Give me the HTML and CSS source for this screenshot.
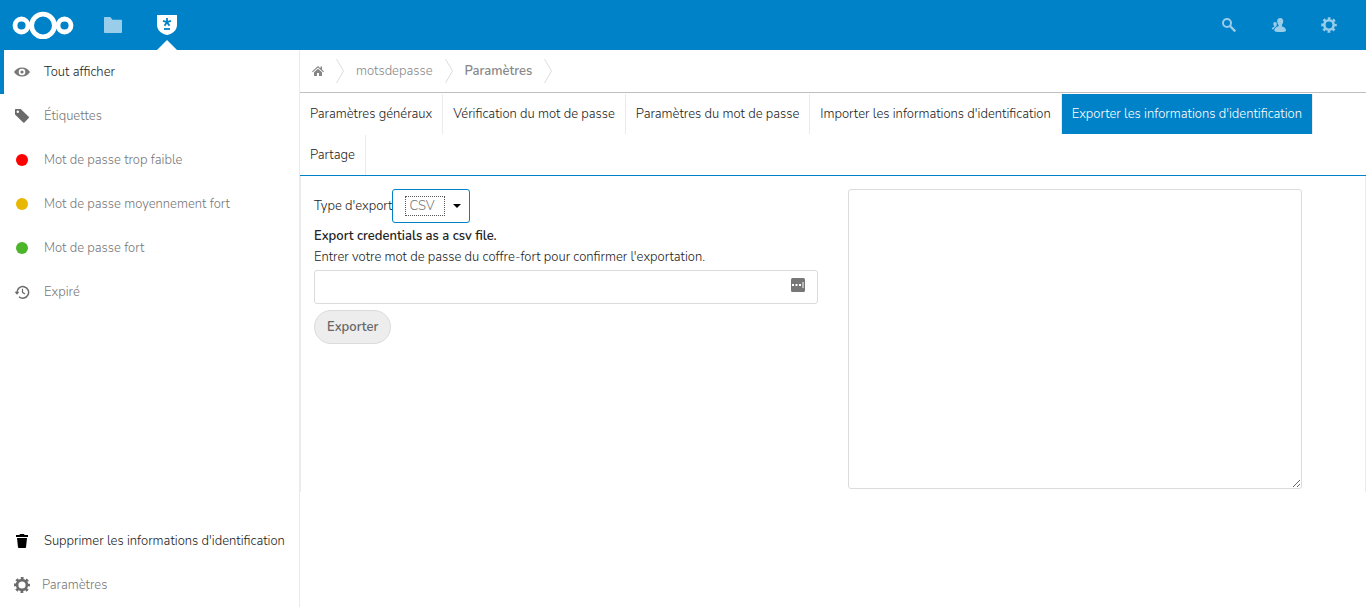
FILE: index.html
```
<!DOCTYPE html>
<html lang="fr">
<head>
  <meta charset="UTF-8" />
  <meta name="viewport" content="width=device-width, initial-scale=1.0"/>
  <title>Paramètres - motsdepasse</title>
  <link rel="stylesheet" href="styles.css">
</head>
<body>

  <!-- Top bar -->
  <header class="header">
    <a href="#" class="logo" aria-label="Accueil">
      <svg width="62" height="28" viewBox="0 0 62 28" fill="none" stroke="#fff">
        <circle cx="9.5" cy="14.5" r="6.5" stroke-width="4.8"/>
        <circle cx="31" cy="14.5" r="11.4" stroke-width="4.8"/>
        <circle cx="52.5" cy="14.5" r="6.5" stroke-width="4.8"/>
      </svg>
    </a>
    <nav class="apps">
      <a href="#" class="app" aria-label="Fichiers">
        <svg width="18" height="16" viewBox="0 0 18 16" fill="#fff"><path d="M.8 0h5.6l2 2.800h8.800c.5 0 .8.3.8.8v11.600c0 .5-.3.8-.8.8H.8c-.5 0-.8-.3-.8-.8V.8C0 .3.300 0 .8 0z"/></svg>
      </a>
      <a href="#" class="app active" aria-label="Mots de passe">
        <svg width="20" height="20" viewBox="0 0 20 20">
          <path fill="#fff" d="M0 0h20v10c0 5.200-4.500 8.800-10 10C4.500 18.800 0 15.200 0 10z"/>
          <g stroke="#0082c9" stroke-width="1.800" fill="none"><path d="M10 7.200V3M10 7.200L6 5.900M10 7.200l4-1.300M10 7.200l-2.500 3.600M10 7.200l2.500 3.600"/><path d="M7 14h6"/></g>
        </svg>
      </a>
    </nav>
    <div class="header-right">
      <button type="button" class="header-button" aria-label="Rechercher">
        <svg width="16" height="16" viewBox="0 0 16 16" fill="none" stroke="#fff"><circle cx="6" cy="6" r="4" stroke-width="2"/><path d="M9 9l5.300 5.300" stroke-width="2.400"/></svg>
      </button>
      <button type="button" class="header-button" aria-label="Contacts">
        <svg width="16" height="16" viewBox="0 0 16 16" fill="#fff"><path d="M9.200 1C7.500 1 6.200 2.200 6.200 4c0 1.700.5 2.800 1.300 3.800v1.400L5.600 10C4 10.800 3.300 12 3.300 13.400c0 1 2.500 1.600 6 1.600s5.700-.6 5.700-1.600c0-1.600-.8-2.800-2.600-3.500l-1.500-.7V7.800c.8-1 1.300-2.100 1.300-3.800 0-1.800-1.300-3-3-3z"/><path d="M4 5C2.900 5 2.300 5.800 2.300 6.800c0 .9.300 1.500.8 2v1L1.800 10.400C1 10.800.8 11.400.8 12.300h1.800c.4-1.300 1.200-2.400 2.900-3.100V8.400c.2-.4.300-1 .3-1.600C5.800 5.700 5.100 5 4 5z"/></svg>
      </button>
      <button type="button" class="header-button" aria-label="Réglages">
        <svg width="16" height="16" viewBox="0 0 16 16" fill="none" stroke="#fff"><circle cx="8" cy="8" r="4.700" stroke-width="2.600"/><circle cx="8" cy="8" r="6.600" stroke-width="2.400" stroke-dasharray="2.700 2.484" stroke-dashoffset="1.350"/></svg>
      </button>
    </div>
  </header>

  <div class="content">

    <!-- Left navigation -->
    <nav class="sidebar">
      <ul>
        <li><a href="#" class="nav-link active">
          <svg class="nav-icon" viewBox="0 0 16 16"><path fill="#777" fill-rule="evenodd" d="M8 3.400C4.500 3.400 1.500 5.500 0 8c1.500 2.500 4.500 4.600 8 4.600s6.500-2.100 8-4.600c-1.500-2.500-4.500-4.600-8-4.600zm0 1.300a3.300 3.300 0 1 1 0 6.600 3.300 3.300 0 0 1 0-6.600z"/><circle cx="8" cy="8" r="1.600" fill="#777"/></svg>
          Tout afficher</a></li>
        <li><a href="#" class="nav-link">
          <svg class="nav-icon" viewBox="0 0 16 16"><path fill="#6b6b6b" fill-rule="evenodd" d="M1 1.600C1 1.200 1.300 1 1.700 1h5l8 7.800c.5.500.4.900 0 1.300l-4.200 4.400c-.4.400-.9.400-1.300 0L1 6.500zM3.800 2.600a1.200 1.200 0 1 0 0 2.400 1.200 1.200 0 0 0 0-2.400z"/></svg>
          Étiquettes</a></li>
        <li><a href="#" class="nav-link"><span class="nav-icon"><span class="dot weak"></span></span>Mot de passe trop faible</a></li>
        <li><a href="#" class="nav-link"><span class="nav-icon"><span class="dot medium"></span></span>Mot de passe moyennement fort</a></li>
        <li><a href="#" class="nav-link"><span class="nav-icon"><span class="dot strong"></span></span>Mot de passe fort</a></li>
        <li><a href="#" class="nav-link">
          <svg class="nav-icon" viewBox="0 0 16 16" fill="none" stroke="#6b6b6b" stroke-width="1.500"><path d="M3 8.500a5.800 5.800 0 1 1 2 4.200"/><path d="M8.500 4.800v3.500l2.500 1.600" stroke-width="1.200"/><path d="M.6 7.800h4.800L3 10.800z" fill="#6b6b6b" stroke="none"/></svg>
          Expiré</a></li>
      </ul>
      <ul class="sidebar-bottom">
        <li><a href="#" class="nav-link dark">
          <svg class="nav-icon" viewBox="0 0 16 16"><path d="M6 1h4l.6 1H14v2H2V2h3.400zM3 5h10l-1 9.200c0 .5-.4.800-.8.800H4.800c-.4 0-.8-.3-.8-.8z"/></svg>
          Supprimer les informations d'identification</a></li>
        <li><button type="button" class="nav-link settings">
          <svg class="nav-icon" viewBox="0 0 16 16" fill="none" stroke="#6b6b6b"><circle cx="8" cy="8" r="4.900" stroke-width="2.600"/><circle cx="8" cy="8" r="6.800" stroke-width="2.400" stroke-dasharray="2.800 2.541" stroke-dashoffset="1.400"/></svg>
          Paramètres</button></li>
      </ul>
    </nav>

    <main class="main">
      <!-- Breadcrumb -->
      <nav class="breadcrumb">
        <a href="#" class="home" aria-label="Coffres">
          <svg width="12" height="10" viewBox="0 0 12 10" fill="#868686"><path d="M6 0l2.500 2.200V.6H10v3L12 5.400l-.7.800L6 1.600.7 6.200 0 5.400z"/><path d="M6 2.700l4 3.500V10H7V7H5v3H2V6.200z"/></svg>
        </a>
        <svg class="chevron" viewBox="0 0 8 24"><path d="M.5 0l7 12-7 12"/></svg>
        <a href="#">motsdepasse</a>
        <svg class="chevron" viewBox="0 0 8 24"><path d="M.5 0l7 12-7 12"/></svg>
        <a href="#" class="current">Paramètres</a>
        <svg class="chevron" viewBox="0 0 8 24"><path d="M.5 0l7 12-7 12"/></svg>
      </nav>

      <!-- Settings tabs -->
      <nav class="tabs">
        <a href="#" class="tab">Paramètres généraux</a>
        <a href="#" class="tab">Vérification du mot de passe</a>
        <a href="#" class="tab">Paramètres du mot de passe</a>
        <a href="#" class="tab">Importer les informations d'identification</a>
        <a href="#" class="tab active">Exporter les informations d'identification</a>
        <a href="#" class="tab">Partage</a>
      </nav>

      <section class="panel">
        <form class="export">
          <div class="type-row">
            <label for="exportType">Type d'export</label>
            <span class="select-wrap">
              <select id="exportType">
                <option>CSV</option>
                <option>JSON</option>
              </select>
              <span class="focus-ring"></span>
              <svg class="caret" width="8" height="4" viewBox="0 0 8 4"><path d="M0 0h8L4 4z"/></svg>
            </span>
          </div>
          <strong class="description">Export credentials as a csv file.</strong>
          <label for="vaultPassword">Entrer votre mot de passe du coffre-fort pour confirmer l'exportation.</label>
          <div class="password-wrap">
            <input type="password" id="vaultPassword">
            <svg class="key-badge" width="14" height="14" viewBox="0 0 14 14"><rect width="14" height="14" rx="1.500" fill="#777"/><path fill="#fff" d="M1 6h2v2H1zM4.500 6h2v2h-2zM8 6h2v2H8zM11.500 4h1v6h-1z"/></svg>
          </div>
          <button type="button" class="export-button">Exporter</button>
        </form>
        <div class="output">
          <textarea aria-label="Journal d'exportation"></textarea>
        </div>
      </section>
    </main>
  </div>

</body>
</html>
```
FILE: styles.css
```
* {
  box-sizing: border-box;
}

body {
  margin: 0;
  min-height: 100vh;
  display: flex;
  flex-direction: column;
  background-color: #fff;
  color: #222;
  font-family: Nunito, Lato, sans-serif;
  font-size: 13px;
  font-weight: 300;
  line-height: 20px;
}

a {
  color: inherit;
  text-decoration: none;
}

button,
input,
select,
textarea {
  font: inherit;
  color: inherit;
}

/* Top bar */
.header {
  height: 50px;
  display: flex;
  background-color: #0082c9;
}

.logo {
  display: flex;
  align-items: center;
  padding: 0 12px;
}

.apps {
  display: flex;
}

.app {
  width: 54px;
  display: flex;
  align-items: center;
  justify-content: center;
  position: relative;
}

.app svg {
  opacity: 0.6;
}

.app.active svg {
  opacity: 1;
}

.app.active::after {
  content: "";
  position: absolute;
  bottom: 0;
  left: 17px;
  border: 10px solid transparent;
  border-top: 0;
  border-bottom-color: #fff;
}

.header-right {
  display: flex;
  margin-left: auto;
  padding-right: 12px;
}

.header-button {
  width: 50px;
  padding: 0;
  border: none;
  background: none;
  display: flex;
  align-items: center;
  justify-content: center;
  opacity: 0.6;
}

/* Left navigation */
.content {
  flex: 1;
  display: flex;
}

.sidebar {
  width: 300px;
  flex: none;
  display: flex;
  flex-direction: column;
  border-right: 1px solid #ebebeb;
}

.sidebar ul {
  list-style: none;
  margin: 0;
  padding: 0;
}

.sidebar .sidebar-bottom {
  margin-top: auto;
}

.nav-link {
  width: 100%;
  height: 44px;
  display: flex;
  align-items: center;
  gap: 14px;
  padding: 0 0 0 10px;
  border: none;
  border-left: 4px solid transparent;
  background: none;
  color: #777;
  white-space: nowrap;
}

.nav-link.active {
  border-left-color: #0082c9;
  color: #222;
}

.nav-link.dark {
  color: #222;
}

.nav-link.settings {
  gap: 12px;
}

.nav-icon {
  width: 16px;
  height: 16px;
  flex: none;
  display: flex;
  align-items: center;
  justify-content: center;
}

.dot {
  width: 12px;
  height: 12px;
  border-radius: 50%;
}

.weak {
  background-color: #ff0000;
}

.medium {
  background-color: #eab700;
}

.strong {
  background-color: #4cb52a;
}

/* Breadcrumb */
.main {
  flex: 1;
  min-width: 0;
}

.breadcrumb {
  height: 43px;
  display: flex;
  align-items: center;
  gap: 12px;
  padding-left: 12px;
  border-bottom: 1px solid #bfbfbf;
  color: #888;
}

.home {
  display: flex;
}

.current {
  font-weight: 600;
}

.chevron {
  width: 8px;
  height: 24px;
  fill: none;
  stroke: #ddd;
}

/* Tabs */
.tabs {
  display: flex;
  flex-wrap: wrap;
  padding-top: 1px;
  border-bottom: 1px solid #0082c9;
  row-gap: 1px;
}

.tab {
  padding: 10px;
  border-right: 1px solid #ebebeb;
}

.tab.active {
  background-color: #0082c9;
  color: #fff;
}

/* Export panel */
.panel {
  display: grid;
  grid-template-columns: 1fr 1fr;
  border: 1px solid #ebebeb;
  border-width: 0 1px;
}

.export,
.output {
  padding: 13px 13px 3px 15px;
}

.export {
  display: flex;
  flex-direction: column;
  align-items: flex-start;
  padding-left: 13px;
  padding-right: 15px;
}

.type-row {
  display: flex;
  align-items: center;
}

.select-wrap {
  position: relative;
}

.select-wrap select {
  display: block;
  width: 78px;
  height: 34px;
  padding: 0 16px;
  appearance: none;
  border: 1px solid #0082c9;
  border-radius: 3px;
  background-color: #fff;
  color: #777;
}

.focus-ring {
  position: absolute;
  top: 7px;
  left: 13px;
  width: 40px;
  height: 20px;
  border: 1px dotted #555;
  pointer-events: none;
}

.caret {
  position: absolute;
  top: 15px;
  right: 9px;
  pointer-events: none;
}

.description {
  margin: 3px 0 1px;
  font-weight: 600;
}

.password-wrap {
  position: relative;
  width: 100%;
  margin: 3px 0 6px;
}

.password-wrap input {
  display: block;
  width: 100%;
  height: 34px;
  padding: 6px 40px 6px 8px;
  border: 1px solid #dbdbdb;
  border-radius: 3px;
}

.key-badge {
  position: absolute;
  top: 8px;
  right: 13px;
}

.export-button {
  height: 34px;
  padding: 0 12px;
  border: 1px solid #dbdbdb;
  border-radius: 17px;
  background-color: #ededed;
  color: #666;
  font-weight: 600;
}

.output textarea {
  display: block;
  width: 90%;
  height: 300px;
  border: 1px solid #dbdbdb;
  border-radius: 3px;
  resize: both;
}
```
